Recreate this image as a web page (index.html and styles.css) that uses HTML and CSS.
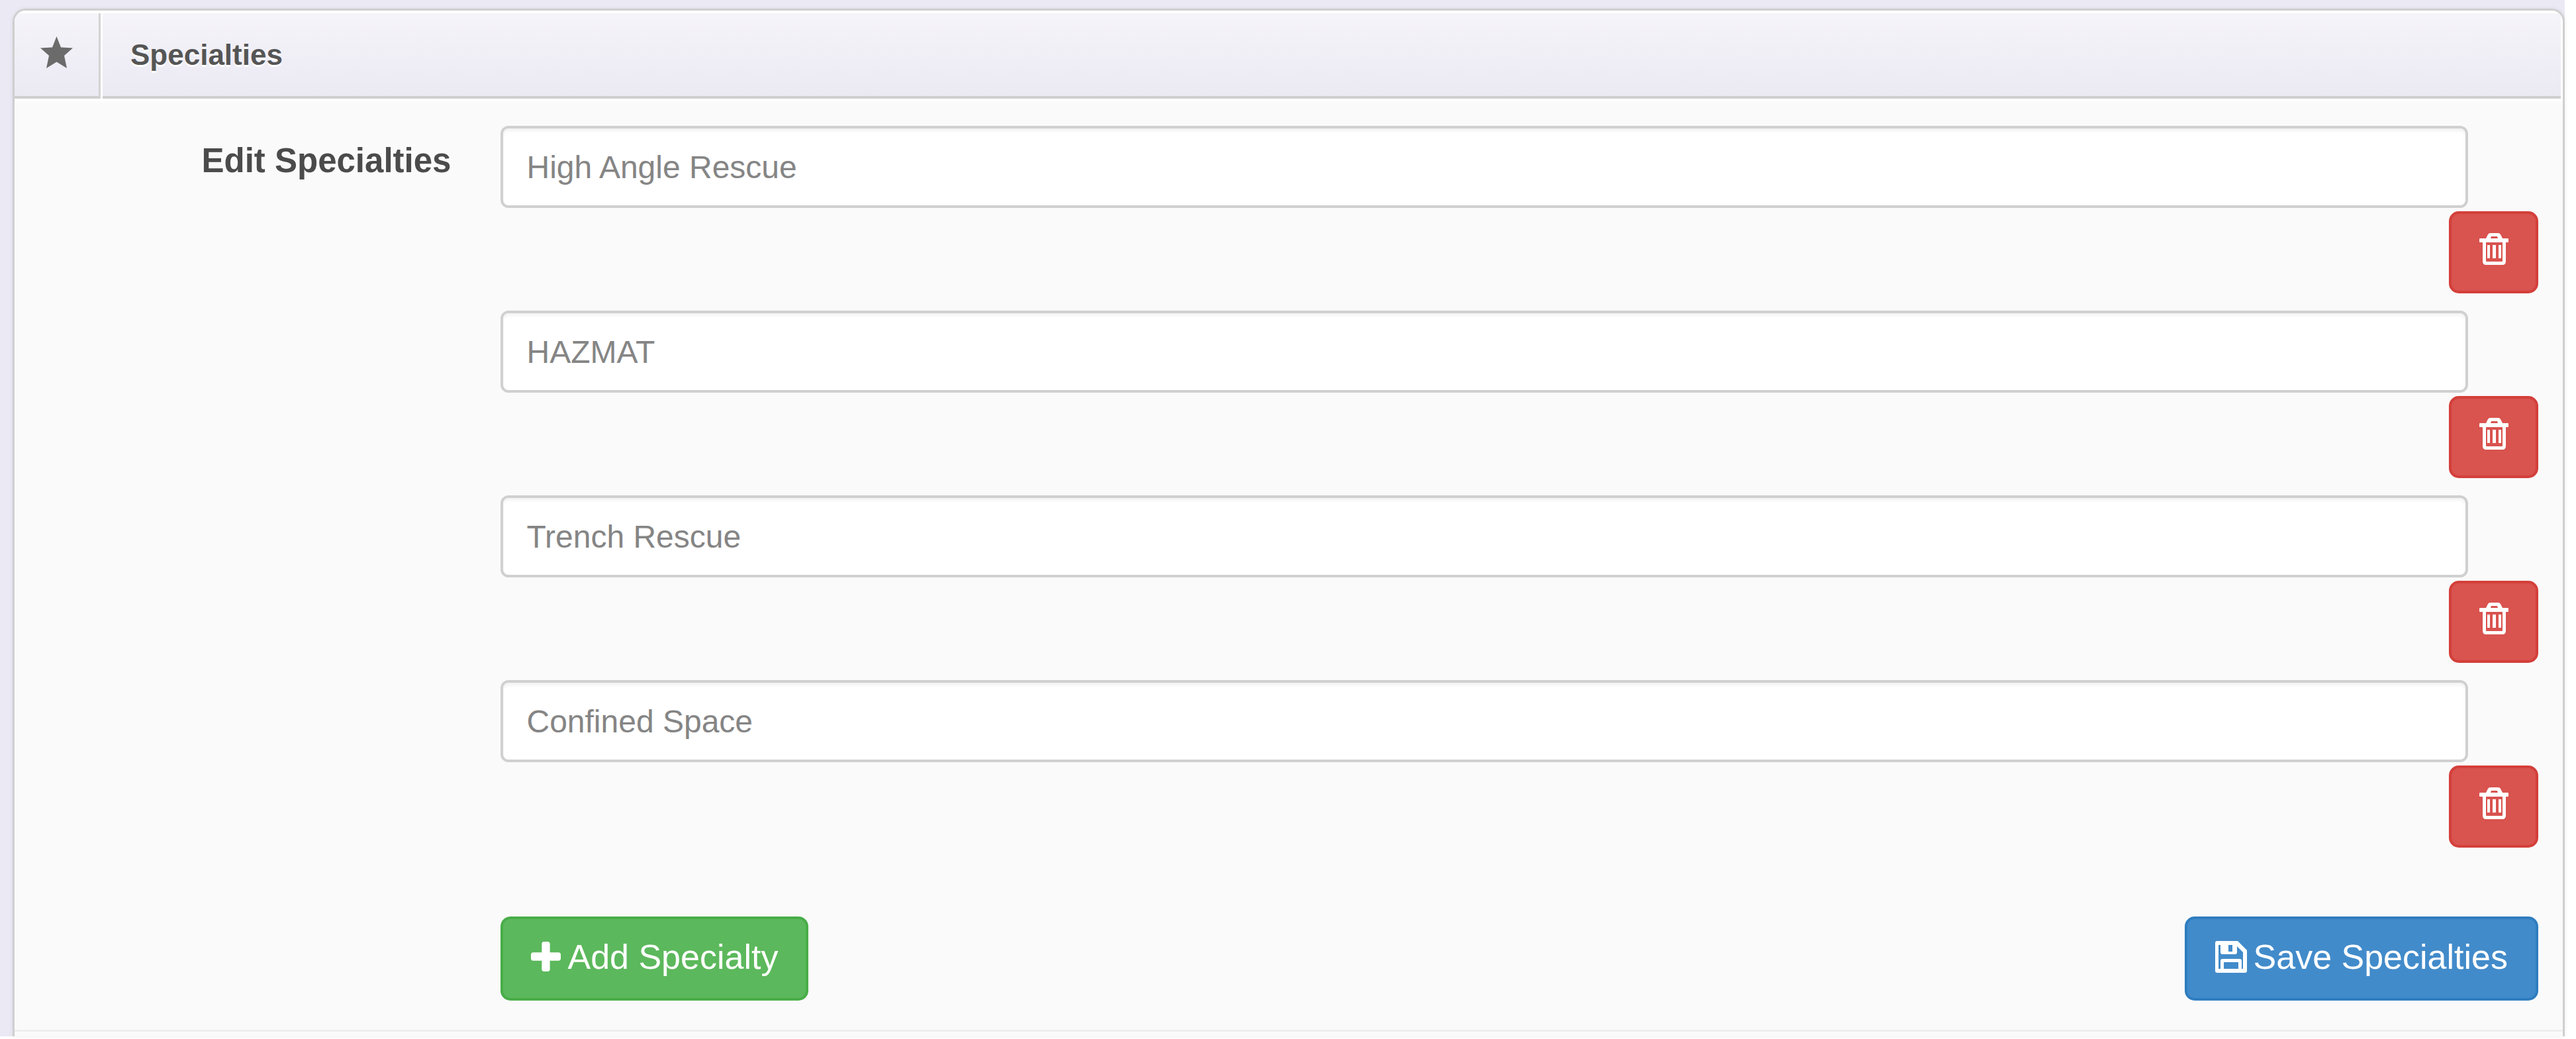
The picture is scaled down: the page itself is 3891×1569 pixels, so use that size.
FILE: index.html
```html
<!DOCTYPE html>
<html lang="en">
<head>
<meta charset="utf-8">
<title>Specialties</title>
<link rel="stylesheet" href="styles.css">
</head>
<body>
<svg class="sprite" aria-hidden="true">
  <symbol id="icon-star" viewBox="0 0 49 48"><path d="M24.500 0L31 16.500L49 17.500L36 29L40 48L24.500 38.500L9 48L13 29L0 17.500L18 16.500Z"/></symbol>
  <symbol id="icon-trash" viewBox="0 0 44 48"><path fill-rule="evenodd" d="M1 8H10L13 2Q14 0 17 0H28Q31 0 32 2L35 8H43Q44 8 44 9V13Q44 14 43 14H40V42Q40 48 35 48H10Q5 48 5 42V14H1Q0 14 0 13V9Q0 8 1 8ZM17 8H28L27 5H18ZM10 14V42Q10 43 11 43H34Q35 43 35 42V14ZM12 18H16V38H12ZM20 18H25V38H20ZM29 18H33V38H29Z"/></symbol>
  <symbol id="icon-plus" viewBox="192 128 1408 1408"><path d="M1600 736v192q0 40-28 68t-68 28h-416v416q0 40-28 68t-68 28h-192q-40 0-68-28t-28-68v-416h-416q-40 0-68-28t-28-68v-192q0-40 28-68t68-28h416v-416q0-40 28-68t68-28h192q40 0 68 28t28 68v416h416q40 0 68 28t28 68z"/></symbol>
  <symbol id="icon-save" viewBox="0 0 48 48"><path fill-rule="evenodd" d="M3 0H34L48 14V45Q48 48 45 48H3Q0 48 0 45V3Q0 0 3 0ZM5 6V42H8V30Q8 27 11 27H37Q40 27 40 30V42H42V17L33 8V17Q33 20 30 20H11Q8 20 8 17V6ZM20 6V16H26V6ZM13 32V42H35V32Z"/></symbol>
</svg>
<main class="page">
  <section class="panel">
    <header class="panel-header">
      <span class="panel-icon"><svg class="star" aria-hidden="true"><use href="#icon-star"/></svg></span>
      <h1 class="panel-title">Specialties</h1>
    </header>
    <form class="panel-body">
      <label class="form-label" for="specialty-1">Edit Specialties</label>
      <div class="fields">
        <div class="specialty">
          <input class="text-input" id="specialty-1" type="text" value="High Angle Rescue">
          <button class="btn btn-delete" type="button" aria-label="Delete High Angle Rescue"><svg class="trash" aria-hidden="true"><use href="#icon-trash"/></svg></button>
        </div>
        <div class="specialty">
          <input class="text-input" type="text" value="HAZMAT" aria-label="Specialty 2">
          <button class="btn btn-delete" type="button" aria-label="Delete HAZMAT"><svg class="trash" aria-hidden="true"><use href="#icon-trash"/></svg></button>
        </div>
        <div class="specialty">
          <input class="text-input" type="text" value="Trench Rescue" aria-label="Specialty 3">
          <button class="btn btn-delete" type="button" aria-label="Delete Trench Rescue"><svg class="trash" aria-hidden="true"><use href="#icon-trash"/></svg></button>
        </div>
        <div class="specialty">
          <input class="text-input" type="text" value="Confined Space" aria-label="Specialty 4">
          <button class="btn btn-delete" type="button" aria-label="Delete Confined Space"><svg class="trash" aria-hidden="true"><use href="#icon-trash"/></svg></button>
        </div>
        <div class="actions">
          <button class="btn btn-action btn-add" type="button"><svg class="plus" aria-hidden="true"><use href="#icon-plus"/></svg>Add Specialty</button>
          <button class="btn btn-action btn-save" type="submit"><svg class="save" aria-hidden="true"><use href="#icon-save"/></svg>Save Specialties</button>
        </div>
      </div>
    </form>
  </section>
</main>
</body>
</html>
```
FILE: styles.css
```css
* {
  box-sizing: border-box;
}

body {
  margin: 0;
  background: #fff;
  color: #4b4b4b;
  font-family: "Liberation Sans", Arial, sans-serif;
}

svg {
  display: block;
  flex: none;
  fill: currentColor;
}

.sprite {
  display: none;
}

.page {
  margin: 0 17px 4px 0;
  padding: 13px 0 0 19px;
  background: #ebe9f4;
}

.panel {
  overflow: hidden;
  border: 3px solid #cfcfcf;
  border-bottom: 0;
  border-radius: 20px 20px 0 0;
  background: #fafafa;
  box-shadow: 0 0 6px rgba(0, 0, 0, 0.08);
}

.panel-header {
  display: flex;
  gap: 3px;
  padding: 4px 3px 0 0;
  background: #fff;
}

.panel-icon,
.panel-title {
  display: flex;
  align-items: center;
  height: 129px;
  border-bottom: 4px solid #cfcfcf;
  background: linear-gradient(#f5f4f9, #ebe9f3);
}

.panel-icon {
  justify-content: center;
  width: 130px;
  padding-bottom: 8px;
  border-right: 3px solid #d3d3d3;
  color: #6b6b6b;
}

.panel-title {
  flex: 1;
  margin: 0;
  padding-left: 42px;
  color: #555;
  font-size: 44px;
  text-shadow: 0 3px 0 #fff;
}

.panel-body {
  display: grid;
  grid-template-columns: 3fr 14fr;
  column-gap: 75px;
  padding: 37px 37px 44px 0;
  border-top: 4px solid #fff;
  border-bottom: 3px solid #eee;
  margin-bottom: 7px;
}

.form-label {
  padding-top: 23px;
  font-size: 51px;
  font-weight: bold;
  line-height: 60px;
  text-align: right;
}

.fields {
  display: flex;
  flex-direction: column;
  gap: 26px;
}

.specialty {
  display: flex;
  flex-direction: column;
  align-items: flex-end;
  gap: 5px;
}

.text-input {
  align-self: flex-start;
  width: calc(100% - 106px);
  height: 124px;
  padding: 0 35px;
  border: 4px solid #d0d0d0;
  border-radius: 12px;
  background: #fff;
  box-shadow: inset 0 4px 4px rgba(0, 0, 0, 0.05);
  color: #858585;
  font: 48px "Liberation Sans", Arial, sans-serif;
}

.btn {
  display: flex;
  align-items: center;
  justify-content: center;
  border: 4px solid;
  border-radius: 15px;
  color: #fff;
  font: 52px "Liberation Sans", Arial, sans-serif;
}

.btn-delete {
  width: 135px;
  height: 124px;
  padding: 0 0 10px;
  border-color: #d43f3a;
  background: #d9534f;
}

.actions {
  display: flex;
  justify-content: space-between;
  padding-top: 78px;
}

.btn-action {
  gap: 10px;
  height: 127px;
  padding: 0 42px 6px;
}

.btn-add {
  border-color: #48ad48;
  background: #5cb85c;
}

.btn-save {
  border-color: #2f7dbf;
  background: #428bca;
}

.star {
  width: 49px;
  height: 48px;
}

.trash {
  width: 44px;
  height: 48px;
}

.plus {
  width: 45px;
  height: 45px;
}

.save {
  width: 48px;
  height: 48px;
}
```
